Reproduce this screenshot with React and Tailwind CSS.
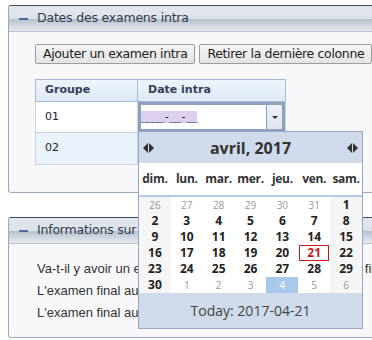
const DAYS = ["dim.", "lun.", "mar.", "mer.", "jeu.", "ven.", "sam."];

const WEEKS = [
  [[26, 0], [27, 0], [28, 0], [29, 0], [30, 0], [31, 0], [1, 1]],
  [[2, 1], [3, 1], [4, 1], [5, 1], [6, 1], [7, 1], [8, 1]],
  [[9, 1], [10, 1], [11, 1], [12, 1], [13, 1], [14, 1], [15, 1]],
  [[16, 1], [17, 1], [18, 1], [19, 1], [20, 1], [21, 1], [22, 1]],
  [[23, 1], [24, 1], [25, 1], [26, 1], [27, 1], [28, 1], [29, 1]],
  [[30, 1], [1, 0], [2, 0], [3, 0], [4, 2], [5, 0], [6, 0]],
];

function Arrows() {
  return (
    <svg width="11" height="10" viewBox="0 0 11 10" className="block">
      <path d="M5 0 L0 5 L5 10 Z" fill="#333" />
      <path d="M6 0 L11 5 L6 10 Z" fill="#333" />
    </svg>
  );
}

function PanelHeader({ title }) {
  return (
    <div className="h-[26px] flex items-center gap-[9px] pl-[10px] border-b border-[#b9c3cf] rounded-t-[3px] bg-[linear-gradient(to_bottom,#e3e7ed_0%,#dce1e8_50%,#b8c2ce_54%,#d2d9e1_80%,#e6eaee_100%)]">
      <span className="block w-[9px] h-[2px] bg-[#4b6d9c]" />
      <span className="text-[12.5px] text-[#2f3c4f] font-['DejaVu_Sans',sans-serif] tracking-[-0.2px]">{title}</span>
    </div>
  );
}

function Calendar() {
  return (
    <div className="absolute left-[138px] top-[131px] w-[225px] border border-[#93a8c6] bg-white font-['Open_Sans',sans-serif] text-[#333]">
      <div className="h-[31px] bg-[#cfdbeb] flex items-center justify-between px-[4px]">
        <Arrows />
        <span className="text-[16px] font-bold text-[#333]">avril, 2017</span>
        <Arrows />
      </div>
      <div className="h-[34px] grid grid-cols-7 items-center border-b-2 border-[#b3cbea]">
        {DAYS.map((d) => (
          <span key={d} className="text-center text-[12px] font-bold tracking-[-0.3px]">{d}</span>
        ))}
      </div>
      <div className="grid grid-cols-7">
        {WEEKS.flat().map(([n, kind], i) => {
          const col = i % 7;
          const weekend = col === 0 || col === 6;
          const today = n === 21 && kind === 1;
          let cls = "h-[16px] flex items-center justify-center ";
          if (kind === 2) cls += "bg-[#a9c9ec] text-white text-[10px] ";
          else if (weekend) cls += "bg-[#f5f5f5] ";
          else cls += "bg-white ";
          if (kind === 0) cls += "text-[10px] text-[#999] ";
          if (kind === 1) cls += "text-[12px] font-bold text-[#222] ";
          return (
            <div key={i} className={cls}>
              {today ? (
                <span className="w-[30px] h-[16px] flex items-center justify-center border border-[#c8161d] text-[#c8161d]">{n}</span>
              ) : (
                n
              )}
            </div>
          );
        })}
      </div>
      <div className="h-[35px] bg-[#cfdbeb] flex items-center justify-center text-[14px] text-[#444]">
        Today: 2017-04-21
      </div>
    </div>
  );
}

export default function App() {
  return (
    <div className="relative w-[372px] h-[340px] overflow-hidden bg-white">
      <div className="ml-[8px] mt-[5px] w-[420px] h-[188px] border border-[#9aa9bd] border-t-[#3f4c5f] rounded-[3px] bg-[#f8f8fa]">
        <PanelHeader title="Dates des examens intra" />
        <div className="pl-[26px] pt-[12px]">
          <div className="flex gap-[4px] font-['DejaVu_Sans',sans-serif] text-[12.5px] text-[#222] tracking-[-0.35px]">
            <button className="h-[20px] px-[7px] border border-[#9c9c9c] bg-[linear-gradient(to_bottom,#f6f6f6,#e3e3e3)] rounded-[2px]">
              Ajouter un examen intra
            </button>
            <button className="h-[20px] px-[7px] border border-[#9c9c9c] bg-[linear-gradient(to_bottom,#f6f6f6,#e3e3e3)] rounded-[2px]">
              Retirer la dernière colonne
            </button>
          </div>
          <table className="mt-[15px] w-[251px] border-collapse border border-[#a5bad6] font-['DejaVu_Sans',sans-serif] text-[11px] text-[#222]">
            <thead>
              <tr className="h-[22px] bg-[linear-gradient(to_bottom,#eef4fb,#dde8f5)]">
                <th className="w-[102px] text-left pl-[9px] font-bold text-[#34405a] border border-[#a5bad6]">Groupe</th>
                <th className="text-left pl-[10px] font-bold text-[#34405a] border border-[#a5bad6]">Date intra</th>
              </tr>
            </thead>
            <tbody>
              <tr className="h-[31px] bg-white">
                <td className="pl-[9px] border border-[#c5d3e4]">01</td>
                <td className="p-0 border border-[#c5d3e4]">
                  <div className="flex h-[30px]">
                    <div className="flex-1 border-[3px] border-r-0 border-[#8fa2bd] bg-white flex items-center">
                      <span className="bg-[#dcd0ee] text-[#111] text-[11px] leading-[12px] font-['DejaVu_Sans_Mono',monospace] tracking-[-1px]">____-__-__</span>
                    </div>
                    <div className="w-[19px] border-[3px] border-l border-[#8fa2bd] bg-[linear-gradient(to_bottom,#eef2f8,#dce4ef)] flex items-center justify-center">
                      <svg width="6" height="3" viewBox="0 0 6 3"><path d="M0 0 L6 0 L3 3 Z" fill="#333" /></svg>
                    </div>
                  </div>
                </td>
              </tr>
              <tr className="h-[32px] bg-[#eaf2fc]">
                <td className="pl-[9px] border border-[#c5d3e4]">02</td>
                <td className="border border-[#c5d3e4]"></td>
              </tr>
            </tbody>
          </table>
        </div>
      </div>

      <div className="ml-[8px] mt-[24px] w-[420px] h-[121px] border border-[#9aa9bd] border-t-[#3f4c5f] rounded-[3px] bg-[#f8f8fa]">
        <PanelHeader title="Informations sur l'examen final" />
        <div className="pl-[28px] pt-[14px] font-['Liberation_Sans',Arial,sans-serif] text-[13px] text-[#333] leading-[22px] whitespace-nowrap">
          <p>Va-t-il y avoir un examen final pour ce cours, un examen final ?</p>
          <p>L'examen final aura lieu le</p>
          <p>L'examen final aura une durée de</p>
        </div>
      </div>

      <Calendar />
    </div>
  );
}
